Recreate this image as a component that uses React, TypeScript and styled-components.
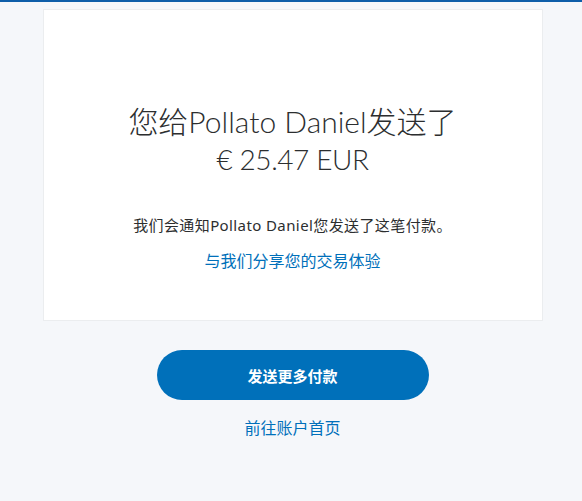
import React from 'react';
import styled, { createGlobalStyle } from 'styled-components';

const GlobalStyle = createGlobalStyle`
  html, body {
    margin: 0;
    padding: 0;
    background: #f5f7fa;
    font-family: Lato, "Noto Sans CJK SC", sans-serif;
  }
`;

const TopBar = styled.div`
  height: 2px;
  background: #0e5ea9;
`;

const Page = styled.main`
  display: flex;
  flex-direction: column;
  align-items: center;
  padding-top: 7px;
  padding-left: 3px;
  min-height: 492px;
`;

const Card = styled.section`
  box-sizing: border-box;
  width: 500px;
  height: 312px;
  background: #fff;
  border: 1px solid #ebedef;
  padding: 92px 20px 0;
  text-align: center;
`;

const Heading = styled.h1`
  margin: 0;
  font-size: 30px;
  line-height: 38px;
  font-weight: 300;
  color: #2c2e2f;
`;

const Amount = styled.span`
  display: block;
  font-size: 28px;
  letter-spacing: -0.4px;
`;

const Message = styled.p`
  margin: 37px 0 0;
  font-family: "Noto Sans", "Noto Sans CJK SC", sans-serif;
  font-size: 15px;
  line-height: 20px;
  letter-spacing: 0.4px;
  color: #2c2e2f;
`;

const TextLink = styled.a<{ $gap: number }>`
  display: block;
  margin-top: ${(p) => p.$gap}px;
  font-family: "Noto Sans", "Noto Sans CJK SC", sans-serif;
  font-size: 16px;
  line-height: 20px;
  color: #0070ba;
  text-decoration: none;
  cursor: pointer;
`;

const PrimaryButton = styled.button`
  margin-top: 29px;
  width: 272px;
  height: 50px;
  border: none;
  border-radius: 25px;
  background: #0070ba;
  color: #fff;
  font-family: Lato, "Noto Sans CJK SC", sans-serif;
  font-size: 15px;
  font-weight: 700;
  cursor: pointer;
`;

const App = () => (
  <>
    <GlobalStyle />
    <TopBar />
    <Page>
      <Card>
        <Heading>
          您给Pollato Daniel发送了
          <Amount>€ 25.47 EUR</Amount>
        </Heading>
        <Message>我们会通知Pollato Daniel您发送了这笔付款。</Message>
        <TextLink $gap={16}>与我们分享您的交易体验</TextLink>
      </Card>
      <PrimaryButton type="button">发送更多付款</PrimaryButton>
      <TextLink $gap={18}>前往账户首页</TextLink>
    </Page>
  </>
);

export default App;
